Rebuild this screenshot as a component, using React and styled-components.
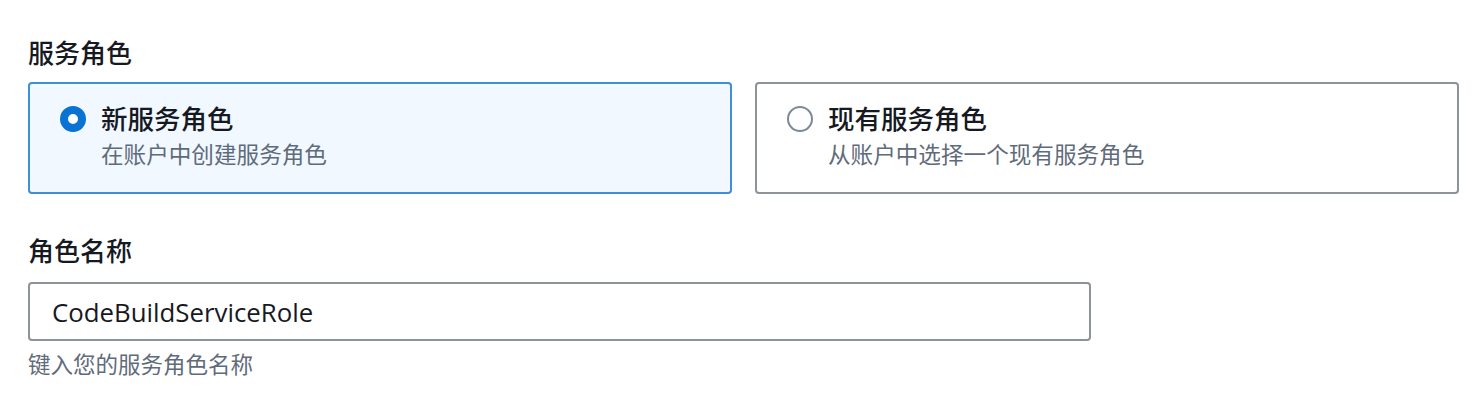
import React from "react";
import styled, { createGlobalStyle } from "styled-components";

const Global = createGlobalStyle`
  body {
    margin: 0;
    background: #ffffff;
    font-family: "Open Sans", "Noto Sans CJK SC", sans-serif;
    color: #16191f;
  }
`;

const Page = styled.div`
  padding: 34px 0 0 28px;
  width: 1431px;
`;

const Field = styled.div`
  display: flex;
  flex-direction: column;
  margin-bottom: ${(p) => p.$gap || 0}px;
`;

const Label = styled.div`
  font-size: 26px;
  line-height: 38px;
  font-weight: 500;
  color: #16191f;
  margin-bottom: ${(p) => p.$after || 10}px;
`;

const Tiles = styled.div`
  display: grid;
  grid-template-columns: 704px 704px;
  column-gap: 23px;
`;

const Tile = styled.label`
  box-sizing: border-box;
  height: 112px;
  display: flex;
  align-items: flex-start;
  gap: 15px;
  padding: 19px 30px 0 30px;
  border-radius: 4px;
  border: 2px solid ${(p) => (p.$checked ? "#3d8fd6" : "#8d9399")};
  background: ${(p) => (p.$checked ? "#f1f8ff" : "#ffffff")};
  cursor: pointer;
`;

const Radio = styled.span`
  box-sizing: border-box;
  flex: none;
  width: 26px;
  height: 26px;
  margin-top: 3px;
  border-radius: 50%;
  border: ${(p) => (p.$checked ? "8px solid #0972d3" : "2px solid #7d8998")};
  background: #ffffff;
`;

const TileText = styled.div`
  display: flex;
  flex-direction: column;
`;

const TileTitle = styled.div`
  font-size: 26.5px;
  line-height: 32px;
  font-weight: 500;
  color: #16191f;
`;

const TileDesc = styled.div`
  font-size: 22.6px;
  line-height: 28px;
  color: #5f6b7a;
  margin-top: 6px;
`;

const Input = styled.input`
  box-sizing: border-box;
  width: 1063px;
  height: 59px;
  padding: 0 22px;
  border: 2px solid #8d9399;
  border-radius: 4px;
  font-family: "Open Sans", "Noto Sans CJK SC", sans-serif;
  font-size: 25.8px;
  color: #16191f;
  outline: none;
`;

const Hint = styled.div`
  font-size: 22.5px;
  line-height: 30px;
  color: #5f6b7a;
  margin-top: 9px;
`;

const options = [
  { title: "新服务角色", desc: "在账户中创建服务角色", checked: true },
  { title: "现有服务角色", desc: "从账户中选择一个现有服务角色", checked: false },
];

export default function App() {
  return (
    <Page>
      <Global />
      <Field $gap={38}>
        <Label>服务角色</Label>
        <Tiles>
          {options.map((o) => (
            <Tile key={o.title} $checked={o.checked}>
              <Radio $checked={o.checked} />
              <TileText>
                <TileTitle>{o.title}</TileTitle>
                <TileDesc>{o.desc}</TileDesc>
              </TileText>
            </Tile>
          ))}
        </Tiles>
      </Field>
      <Field>
        <Label $after={12}>角色名称</Label>
        <Input defaultValue="CodeBuildServiceRole" />
        <Hint>键入您的服务角色名称</Hint>
      </Field>
    </Page>
  );
}
